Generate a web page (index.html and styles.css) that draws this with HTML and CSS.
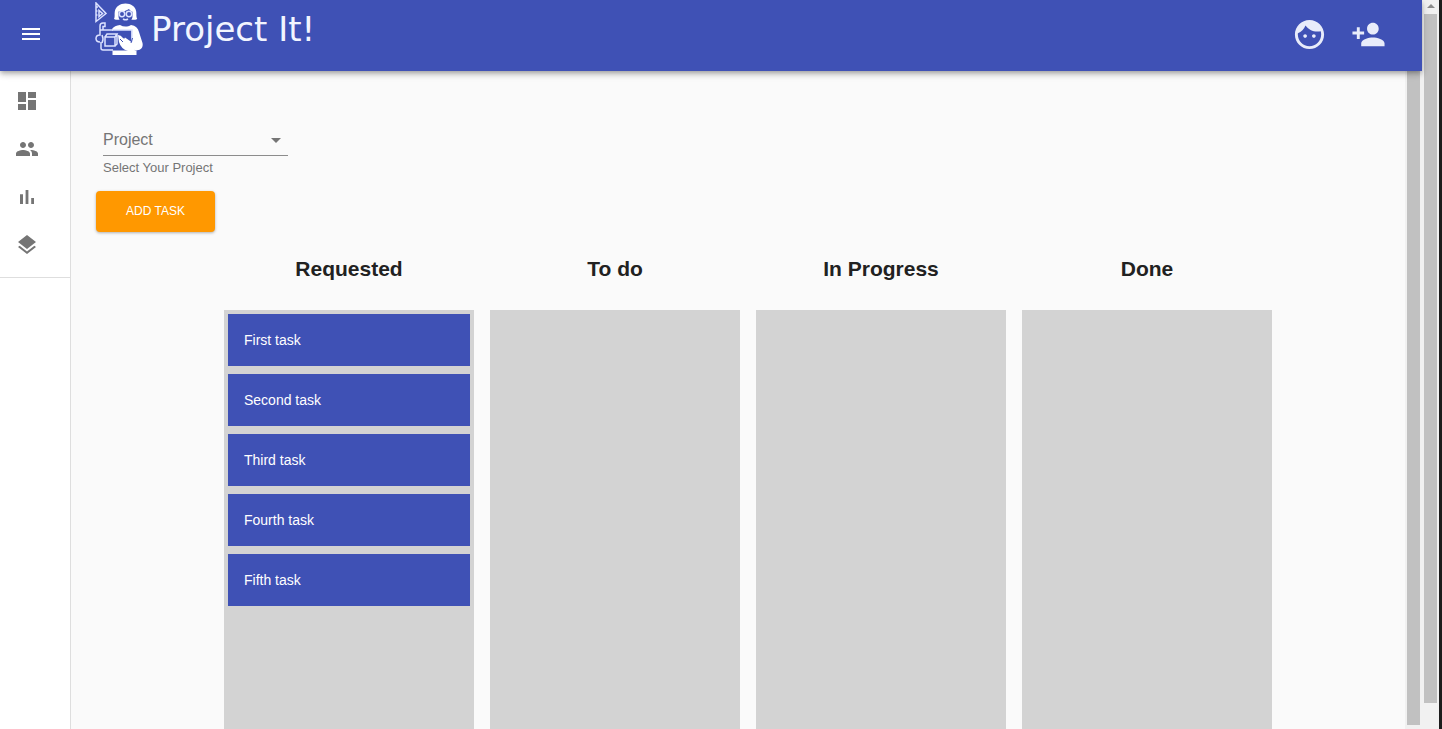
FILE: index.html
```html
<!DOCTYPE html>
<html lang="en">
<head>
<meta charset="utf-8">
<title>Project It!</title>
<link rel="stylesheet" href="styles.css">
</head>
<body>
<div class="window">
  <div class="app">
    <header class="topbar">
      <button class="icon-button" aria-label="Open menu"><svg class="icon" viewBox="0 0 24 24"><path d="M3 18h18v-2H3v2zm0-5h18v-2H3v2zm0-7v2h18V6H3z"/></svg></button>
      <a class="brand" href="#">
        <svg class="brand-mark" viewBox="0 0 48 54" aria-hidden="true">
          <g class="line">
            <path d="M1 1v18.500l10-8z"/>
            <path d="M4 8.500v6l3.500-3z"/>
            <path d="M1 5h2M1 9h1.500M1 13h1.500"/>
          </g>
          <path class="solid" d="M19 17c1.200-2 .3-5 .8-7.500C20.600 4.500 25 1.500 30.500 1.500S40.600 4.500 41.200 9.500c.4 2.500-.2 5.500 1 7.500-2 1-4 1-6.200.5H25c-2 .5-4 .5-6-.5z"/>
          <path class="cut" d="M23.500 9.500c4 .2 8-.7 10.500-2.500 1 1.500 2 2.300 3.500 2.700v4.300c0 4-3 6.500-7 6.500s-7-2.500-7-6.500z"/>
          <g class="line"><circle cx="27" cy="12" r="2.700"/><circle cx="34" cy="12" r="2.700"/><path d="M28 17q2.500 1.500 5 0"/></g>
          <path class="solid" d="M17 27c1.500-2.500 4.500-3.500 8-4 3.500 2 7.500 2 11 0 4.500.7 7 3 8 7l3.500 11c1 5-2 7.500-7 7.500L24 40l-3-6z"/>
          <path class="cut" d="M5 28h31.500v12l-6.500-4.500-8 12.500H5z"/>
          <path class="line" d="M17 28h20v12M6 40v6q0 2 2 2h10"/>
          <g class="line">
            <path d="M5 28v-4q0-3 3-3h2v3.500H8V28M5 28h13"/>
            <path d="M5 28v5q-4 0-4 3.500T5 40"/>
            <path d="M10 35h10v9H10zM10 35l2-3h10l-2 3M20 44l2-2V32M7 33q2 4 0 8"/>
          </g>
          <path class="solid" d="M23 33q3 0 5 3l10 6 2 7h-7q-7-2-9-9z"/>
          <path class="cutline" d="M25 37l3 3M37.500 36l-1.500 5"/>
          <path class="solid" d="M17.500 48.500h24V53h-24z"/>
        </svg>
        <span class="brand-name">Project It!</span>
      </a>
      <nav class="topbar-actions" aria-label="Account">
        <button class="icon-button" aria-label="Profile"><svg class="icon icon-large" viewBox="0 0 24 24"><path d="M9 11.750c-.69 0-1.250.56-1.250 1.250s.56 1.250 1.250 1.250 1.250-.56 1.250-1.250-.56-1.250-1.250-1.250zm6 0c-.69 0-1.250.56-1.250 1.250s.56 1.250 1.250 1.250 1.250-.56 1.250-1.250-.56-1.250-1.250-1.250zM12 2C6.480 2 2 6.480 2 12s4.480 10 10 10 10-4.480 10-10S17.520 2 12 2zm0 18c-4.410 0-8-3.590-8-8 0-.29.020-.58.050-.86 2.360-1.050 4.230-2.980 5.210-5.370C11.070 8.330 14.050 10 17.420 10c.78 0 1.530-.09 2.250-.26.210.71.330 1.470.33 2.260 0 4.410-3.590 8-8 8z"/></svg></button>
        <button class="icon-button" aria-label="Add person"><svg class="icon icon-large" viewBox="0 0 24 24"><path d="M15 12c2.210 0 4-1.790 4-4s-1.790-4-4-4-4 1.790-4 4 1.790 4 4 4zm-9-2V7H4v3H1v2h3v3h2v-3h3v-2H6zm9 4c-2.670 0-8 1.340-8 4v2h16v-2c0-2.660-5.330-4-8-4z"/></svg></button>
      </nav>
    </header>
    <div class="body">
      <nav class="sidebar" aria-label="Main">
        <div class="sidebar-group">
          <a class="sidebar-link" href="#" aria-label="Dashboard"><svg class="icon" viewBox="0 0 24 24"><path d="M3 13h8V3H3v10zm0 8h8v-6H3v6zm10 0h8V11h-8v10zm0-18v6h8V3h-8z"/></svg></a>
          <a class="sidebar-link" href="#" aria-label="People"><svg class="icon" viewBox="0 0 24 24"><path d="M16 11c1.660 0 2.990-1.340 2.990-3S17.660 5 16 5c-1.660 0-3 1.340-3 3s1.340 3 3 3zm-8 0c1.660 0 2.990-1.340 2.990-3S9.660 5 8 5C6.340 5 5 6.340 5 8s1.340 3 3 3zm0 2c-2.330 0-7 1.170-7 3.500V19h14v-2.500c0-2.330-4.670-3.500-7-3.500zm8 0c-.29 0-.62.020-.97.050 1.160.84 1.970 1.970 1.970 3.450V19h6v-2.500c0-2.330-4.670-3.500-7-3.500z"/></svg></a>
          <a class="sidebar-link" href="#" aria-label="Reports"><svg class="icon" viewBox="0 0 24 24"><path d="M5 9.200h3V19H5zM10.600 5h2.800v14h-2.800zm5.600 8H19v6h-2.800z"/></svg></a>
          <a class="sidebar-link" href="#" aria-label="Layers"><svg class="icon" viewBox="0 0 24 24"><path d="M11.990 18.540l-7.370-5.730L3 14.070l9 7 9-7-1.630-1.270-7.380 5.740zM12 16l7.360-5.730L21 9l-9-7-9 7 1.630 1.270L12 16z"/></svg></a>
        </div>
      </nav>
      <main class="content">
        <div class="field">
          <div class="select-box">
            <select id="project" class="select"><option>Project</option></select>
            <svg class="icon select-arrow" viewBox="0 0 24 24" aria-hidden="true"><path d="M7 10l5 5 5-5z"/></svg>
          </div>
          <label class="helper" for="project">Select Your Project</label>
        </div>
        <button class="add-button">ADD TASK</button>
        <div class="board">
          <section class="column">
            <h2 class="column-title">Requested</h2>
            <ul class="tasks">
              <li class="task">First task</li>
              <li class="task">Second task</li>
              <li class="task">Third task</li>
              <li class="task">Fourth task</li>
              <li class="task">Fifth task</li>
            </ul>
          </section>
          <section class="column"><h2 class="column-title">To do</h2><ul class="tasks"></ul></section>
          <section class="column"><h2 class="column-title">In Progress</h2><ul class="tasks"></ul></section>
          <section class="column"><h2 class="column-title">Done</h2><ul class="tasks"></ul></section>
        </div>
      </main>
      <div class="scrollbar scrollbar-inner" aria-hidden="true"><div class="thumb"></div></div>
    </div>
  </div>
  <div class="scrollbar scrollbar-outer" aria-hidden="true">
    <svg class="scroll-up" viewBox="0 0 8 4"><path d="M4 0l4 4H0z"/></svg>
    <div class="thumb"></div>
  </div>
</div>
</body>
</html>
```
FILE: styles.css
```css
* { box-sizing: border-box; }

body {
  margin: 0;
  background: #fafafa;
  color: #212121;
  font-family: "Liberation Sans", Arial, sans-serif;
  font-size: 14px;
}

button { border: 0; font-family: inherit; cursor: pointer; }
a { color: inherit; text-decoration: none; }

.window {
  display: flex;
  height: 100vh;
  overflow: hidden;
  border-right: 3px solid #1c1c1c;
}

.app { flex: 1; min-width: 0; display: flex; flex-direction: column; }

.icon { display: block; width: 24px; height: 24px; fill: currentColor; }
.icon-large { width: 35px; height: 35px; }

.topbar {
  position: relative;
  z-index: 1;
  flex: none;
  display: flex;
  align-items: center;
  height: 71px;
  padding: 0 24px 3px 7px;
  background: #3f51b5;
  color: #fff;
  box-shadow: 0 2px 4px -1px rgba(0, 0, 0, .2), 0 4px 5px rgba(0, 0, 0, .14), 0 1px 10px rgba(0, 0, 0, .12);
}

.icon-button { padding: 12px; background: none; color: inherit; }

.brand { display: flex; gap: 8px; margin-left: 40px; padding-bottom: 10px; }
.brand-mark { width: 48px; height: 54px; }
.brand-mark .line { fill: none; stroke: #dce2ff; stroke-width: 1.5; }
.brand-mark .solid { fill: #fff; }
.brand-mark .cut { fill: #3f51b5; }
.brand-mark .cutline { fill: none; stroke: #3f51b5; stroke-width: 1; }
.brand-name {
  color: #f2f5ff;
  font-family: "DejaVu Sans", sans-serif;
  font-size: 34px;
  line-height: 54px;
}

.topbar-actions { display: flex; margin-left: auto; color: #e8ecfa; }

.body { flex: 1; min-height: 0; display: flex; }

.sidebar {
  flex: none;
  width: 71px;
  background: #fff;
  border-right: 1px solid #dedede;
  color: #757575;
}
.sidebar-group { padding: 6px 0 8px; border-bottom: 1px solid #dedede; }
.sidebar-link { display: flex; align-items: center; height: 48px; padding-left: 15px; }

.content {
  flex: 1;
  min-width: 0;
  display: flex;
  flex-direction: column;
  align-items: flex-start;
  padding: 53px 5px 0 25px;
}

.field { width: 185px; margin-left: 7px; color: #757575; }
.select-box { position: relative; border-bottom: 1px solid #8c8c8c; }
.select {
  display: block;
  width: 100%;
  height: 31px;
  padding: 0 24px 0 0;
  appearance: none;
  border: 0;
  background: none;
  color: inherit;
  font-family: inherit;
  font-size: 16px;
}
.select-arrow { position: absolute; right: 0; top: 4px; pointer-events: none; }
.helper { display: block; margin-top: 4px; font-size: 13px; line-height: 16px; }

.add-button {
  flex: none;
  height: 41px;
  margin-top: 15px;
  padding: 0 30px 2px;
  border-radius: 4px;
  background: #ff9800;
  color: #fff;
  font-size: 12px;
  box-shadow: 0 1px 3px rgba(0, 0, 0, .3);
}

.board {
  flex: 1;
  align-self: stretch;
  display: flex;
  justify-content: center;
  gap: 16px;
}
.column { flex: 0 1 250px; display: flex; flex-direction: column; }
.column-title {
  margin: 0;
  padding: 25px 0 29px;
  font-size: 21px;
  line-height: 24px;
  text-align: center;
}
.tasks {
  flex: 1;
  display: flex;
  flex-direction: column;
  gap: 8px;
  margin: 0;
  padding: 4px;
  list-style: none;
  background: #d3d3d3;
}
.task { padding: 16px; background: #3f51b5; color: #fff; line-height: 20px; }

.scrollbar {
  flex: none;
  display: flex;
  flex-direction: column;
  width: 17px;
  padding: 0 2px;
  background: #f1f1f1;
}
.scrollbar-inner { padding-bottom: 4px; }
.scrollbar-outer { padding-top: 4px; padding-bottom: 26px; }
.thumb { flex: 1; background: #c1c1c1; }
.scroll-up { align-self: center; width: 8px; height: 4px; margin-bottom: 6px; fill: #8b8b8b; }
```
